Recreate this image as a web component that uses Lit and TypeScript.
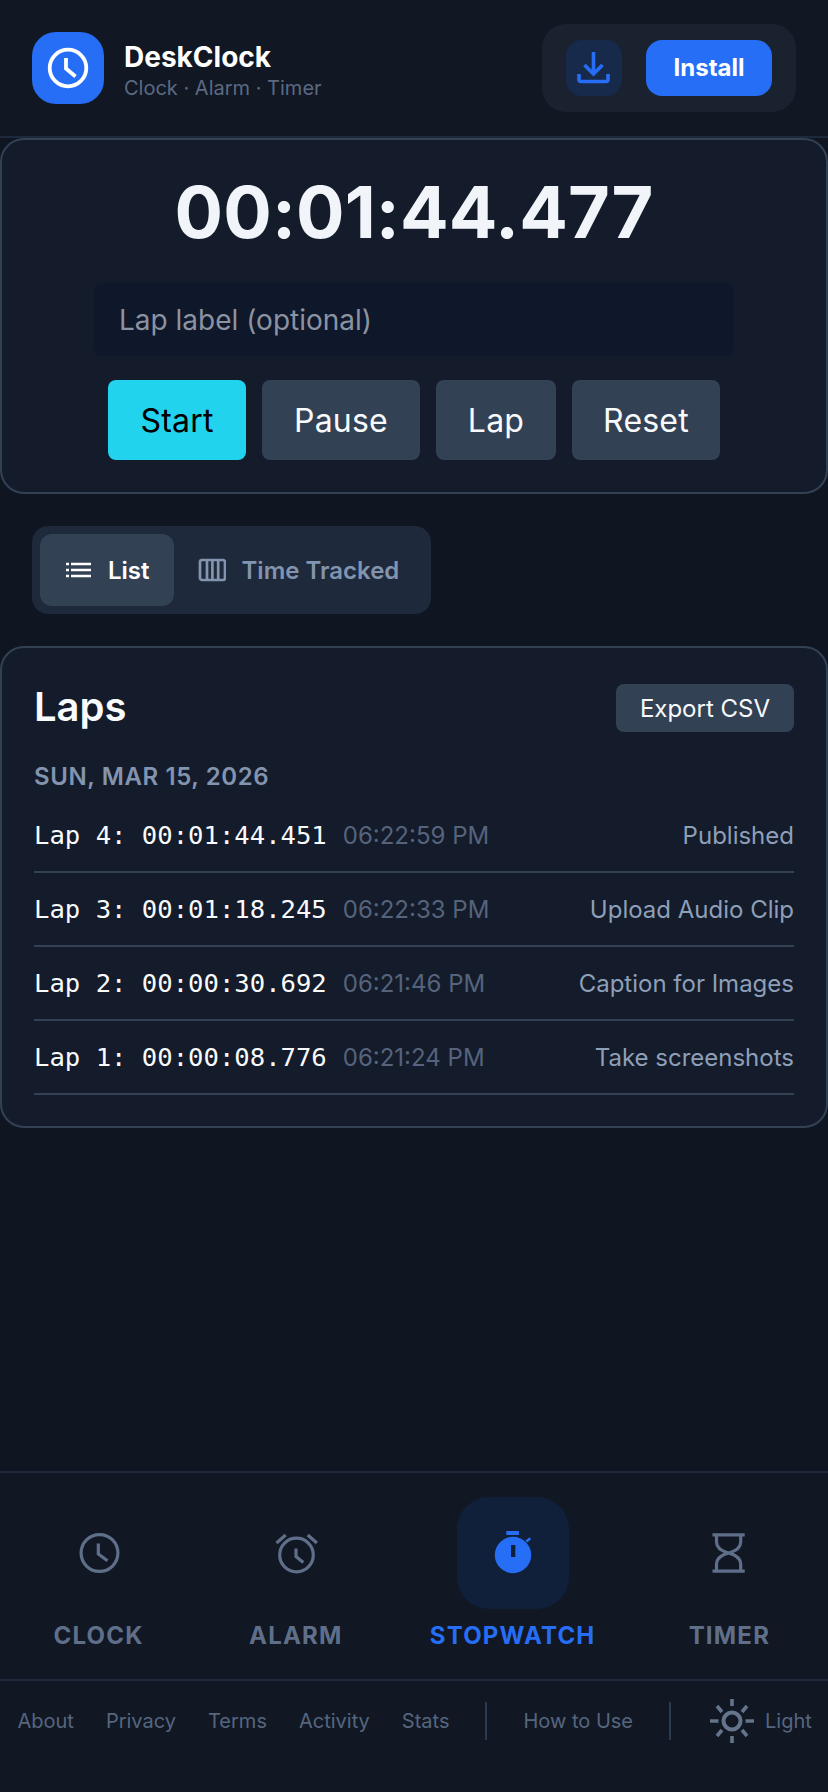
import { LitElement, html, css, svg } from 'lit'
import { customElement } from 'lit/decorators.js'

const laps = [
  { name: 'Lap 4: 00:01:44.451', time: '06:22:59 PM', label: 'Published' },
  { name: 'Lap 3: 00:01:18.245', time: '06:22:33 PM', label: 'Upload Audio Clip' },
  { name: 'Lap 2: 00:00:30.692', time: '06:21:46 PM', label: 'Caption for Images' },
  { name: 'Lap 1: 00:00:08.776', time: '06:21:24 PM', label: 'Take screenshots' },
]

const navIcons = {
  clock: svg`<circle cx="22.5" cy="22" r="18.4" /><path d="M21.3 12.5V23l9.2 6.7" />`,
  alarm: svg`<circle cx="22.5" cy="24" r="16.8" /><path d="M2.5 12l9.2-8M33.7 4l9.2 8M22 17.5v8l7.3 6" />`,
  stopwatch: svg`
    <g class="solid">
      <circle cx="22" cy="24" r="18.2" />
      <rect x="15.3" y="0" width="12.7" height="4" />
      <path d="M34.5 9.5l4-3.2 1.6 2-4 3.2z" />
    </g>
    <rect class="tick" x="20" y="14" width="4.3" height="12" />`,
  timer: svg`
    <path d="M5.5 3.8h32.2M5.5 40.2h32.2" />
    <path d="M9.5 5v6c0 6 5 9 12 11-7 2-12 5-12 11v6M33.7 5v6c0 6-5 9-12 11 7 2 12 5 12 11v6" />`,
}

const navItems = [
  { key: 'clock', label: 'CLOCK', wide: false, active: false },
  { key: 'alarm', label: 'ALARM', wide: false, active: false },
  { key: 'stopwatch', label: 'STOPWATCH', wide: true, active: true },
  { key: 'timer', label: 'TIMER', wide: false, active: false },
] as const

@customElement('app-root')
export class AppRoot extends LitElement {
  static styles = css`
    :host {
      display: block;
      font-family: Inter, 'Noto Sans', sans-serif;
      color: #f1f5f9;
    }

    * {
      box-sizing: border-box;
    }

    .page {
      height: 1792px;
      overflow: hidden;
      display: flex;
      flex-direction: column;
      background: #0f1621;
    }

    button {
      font: inherit;
      border: 0;
      cursor: pointer;
    }

    /* top bar */
    .top {
      height: 138px;
      display: flex;
      align-items: center;
      justify-content: space-between;
      padding: 0 32px;
      background: #111723;
      border-bottom: 2px solid #1e293b;
    }

    .brand {
      display: flex;
      align-items: center;
      gap: 20px;
    }

    .logo {
      width: 72px;
      height: 72px;
      border-radius: 24px;
      background: #266ef6;
      display: flex;
      align-items: center;
      justify-content: center;
    }

    .logo svg {
      fill: none;
      stroke: #fff;
      stroke-width: 3.8;
    }

    .brand-text {
      padding-top: 4px;
    }

    .title {
      font-size: 28px;
      line-height: 34px;
      font-weight: 700;
      color: #fff;
    }

    .sub {
      margin-top: 1px;
      font-size: 20px;
      line-height: 26px;
      color: #5b6a82;
    }

    .install-group {
      display: flex;
      align-items: center;
      gap: 24px;
      padding: 16px 24px;
      border-radius: 24px;
      background: #1a222f;
    }

    .dl {
      width: 56px;
      height: 56px;
      border-radius: 16px;
      background: #172a4b;
      display: flex;
      align-items: center;
      justify-content: center;
      padding: 0;
    }

    .dl svg {
      fill: none;
      stroke: #266ef6;
      stroke-width: 3.6;
    }

    .install {
      width: 126px;
      height: 56px;
      padding-bottom: 2px;
      border-radius: 16px;
      background: #266ef6;
      color: #fff;
      font-size: 24px;
      font-weight: 700;
    }

    /* cards */
    .card {
      background: #141b2a;
      border: 2px solid #334155;
      border-radius: 24px;
    }

    .watch {
      height: 356px;
      display: flex;
      flex-direction: column;
      align-items: center;
      padding-top: 28px;
    }

    .readout {
      font-size: 72px;
      line-height: 88px;
      font-weight: 700;
      letter-spacing: 0.1px;
      color: #f1f5f9;
    }

    .lap-input {
      width: 640px;
      height: 73px;
      margin-top: 27px;
      padding: 0 25px;
      border: 0;
      border-radius: 8px;
      background: #0f172a;
      color: #f1f5f9;
      font: inherit;
      font-size: 28px;
      outline: none;
    }

    .lap-input::placeholder {
      color: #8b93a1;
    }

    .controls {
      display: grid;
      grid-template-columns: 138px 158px 120px 148px;
      gap: 16px;
      margin-top: 24px;
    }

    .controls button {
      height: 80px;
      padding: 0;
      border-radius: 8px;
      background: #334155;
      color: #f8fafc;
      font-size: 32px;
      letter-spacing: 0.2px;
    }

    .controls .start {
      background: #22d3ee;
      color: #000;
    }

    /* list / time tracked switch */
    .switch-row {
      display: flex;
      padding: 32px;
    }

    .switch {
      display: flex;
      padding: 8px;
      border-radius: 16px;
      background: #1e293b;
    }

    .tab {
      height: 72px;
      display: flex;
      align-items: center;
      gap: 16px;
      padding: 0 24px;
      border-radius: 12px;
      background: none;
      color: #8294ae;
      font-size: 24px;
      font-weight: 600;
    }

    .tab.on {
      background: #334155;
      color: #fff;
    }

    .tab svg {
      fill: none;
      stroke: currentColor;
      stroke-width: 2.7;
    }

    /* laps */
    .laps {
      padding: 0 32px 31px;
    }

    .laps-head {
      display: flex;
      align-items: center;
      justify-content: space-between;
      padding-top: 36px;
    }

    .laps-head h2 {
      margin: 0;
      padding-bottom: 2px;
      font-size: 40px;
      line-height: 46px;
      font-weight: 600;
      color: #f8fafc;
    }

    .export {
      height: 48px;
      padding: 0 24px;
      border-radius: 8px;
      background: #334155;
      color: #f8fafc;
      font-size: 24px;
    }

    .date {
      margin-top: 30px;
      font-size: 24px;
      line-height: 30px;
      font-weight: 600;
      letter-spacing: 0.6px;
      color: #8294ae;
    }

    .rows {
      margin-top: 7px;
    }

    .row {
      height: 74px;
      display: flex;
      align-items: center;
      border-bottom: 2px solid #334155;
      font-size: 24px;
    }

    .row .name {
      font-family: 'DejaVu Sans Mono', 'Liberation Mono', monospace;
      font-size: 25.6px;
      color: #f8fafc;
      white-space: pre;
    }

    .row .time {
      margin-left: 16px;
      color: #55647c;
    }

    .row .label {
      margin-left: auto;
      color: #8e9fb8;
    }

    /* bottom nav */
    .nav {
      margin-top: auto;
      height: 208px;
      display: flex;
      justify-content: space-around;
      padding-top: 24px;
      background: #111723;
      border-top: 2px solid #1e293b;
    }

    .nav-item {
      width: 125px;
      display: flex;
      flex-direction: column;
      align-items: center;
      gap: 12px;
      color: #5f6f89;
    }

    .nav-item.wide {
      width: 164px;
    }

    .nav-item.active {
      color: #266ef6;
    }

    .nav-icon {
      width: 112px;
      height: 112px;
      flex: none;
      border-radius: 32px;
      display: flex;
      align-items: center;
      justify-content: center;
    }

    .active .nav-icon {
      background: #10203b;
    }

    .nav-icon svg {
      fill: none;
      stroke: currentColor;
      stroke-width: 3.2;
      overflow: visible;
    }

    .nav-icon .solid {
      fill: currentColor;
      stroke: none;
    }

    .nav-icon .tick {
      fill: #10203b;
      stroke: none;
    }

    .nav-label {
      font-size: 24px;
      line-height: 30px;
      font-weight: 700;
      letter-spacing: 1.2px;
      white-space: nowrap;
    }

    /* footer */
    .foot {
      height: 113px;
      display: flex;
      align-items: flex-start;
      padding: 18px 0 0 17.5px;
      background: #111723;
      border-top: 2px solid #1e293b;
      font-size: 20px;
      color: #56667f;
    }

    .foot-links {
      height: 44px;
      display: flex;
      align-items: center;
      gap: 32px;
    }

    .divider {
      width: 2px;
      height: 38px;
      margin: 3px 36px 0;
      background: #2c3a50;
    }

    .theme {
      height: 44px;
      display: flex;
      align-items: center;
      gap: 11px;
      margin-left: 3px;
    }

    .theme svg {
      fill: none;
      stroke: #64748b;
    }

    .theme .ring {
      stroke-width: 4;
    }

    .theme .rays {
      stroke-width: 3.6;
    }
  `

  renderLap(lap: { name: string; time: string; label: string }) {
    return html`
      <div class="row">
        <span class="name">${lap.name}</span>
        <span class="time">${lap.time}</span>
        <span class="label">${lap.label}</span>
      </div>
    `
  }

  render() {
    return html`
      <div class="page">
        <header class="top">
          <div class="brand">
            <div class="logo">
              <svg width="48" height="48" viewBox="0 0 48 48">
                <circle cx="24" cy="24" r="18.3" />
                <path d="M22 14v10.5l9.5 8" />
              </svg>
            </div>
            <div class="brand-text">
              <div class="title">DeskClock</div>
              <div class="sub">Clock · Alarm · Timer</div>
            </div>
          </div>
          <div class="install-group">
            <button class="dl" aria-label="Download">
              <svg width="36" height="36" viewBox="0 0 36 36">
                <path d="M17.5 2v21M8.5 15l9 9 9-9" />
                <path d="M3 24v5.5a2 2 0 0 0 2 2h25a2 2 0 0 0 2-2V24" />
              </svg>
            </button>
            <button class="install">Install</button>
          </div>
        </header>

        <section class="card watch">
          <div class="readout">00:01:44.477</div>
          <input class="lap-input" placeholder="Lap label (optional)" />
          <div class="controls">
            <button class="start">Start</button>
            <button>Pause</button>
            <button>Lap</button>
            <button>Reset</button>
          </div>
        </section>

        <div class="switch-row">
          <div class="switch">
            <button class="tab on">
              <svg width="28" height="28" viewBox="0 0 28 28">
                <path d="M7 8h20M7 14h20M7 20h20M2 8h3M2 14h3M2 20h3" />
              </svg>
              List
            </button>
            <button class="tab">
              <svg width="28" height="28" viewBox="0 0 28 28">
                <rect x="2" y="4" width="25" height="20" rx="2" />
                <path d="M9 4v20M14.4 4v20M20.2 4v20" />
              </svg>
              Time Tracked
            </button>
          </div>
        </div>

        <section class="card laps">
          <div class="laps-head">
            <h2>Laps</h2>
            <button class="export">Export CSV</button>
          </div>
          <div class="date">SUN, MAR 15, 2026</div>
          <div class="rows">${laps.map((lap) => this.renderLap(lap))}</div>
        </section>

        <nav class="nav">
          ${navItems.map(
            (item) => html`
              <div class="nav-item ${item.wide ? 'wide' : ''} ${item.active ? 'active' : ''}">
                <div class="nav-icon">
                  <svg width="44" height="44" viewBox="0 0 44 44">${navIcons[item.key]}</svg>
                </div>
                <span class="nav-label">${item.label}</span>
              </div>
            `,
          )}
        </nav>

        <footer class="foot">
          <div class="foot-links">
            <span>About</span>
            <span>Privacy</span>
            <span>Terms</span>
            <span>Activity</span>
            <span>Stats</span>
          </div>
          <div class="divider"></div>
          <div class="foot-links"><span>How to Use</span></div>
          <div class="divider"></div>
          <div class="theme">
            <svg width="44" height="44" viewBox="0 0 44 44">
              <circle class="ring" cx="22" cy="22" r="8.5" />
              <path class="rays" d="M22 0v7M22 37v7M0 22h8.5M35.5 22H44M7 7l5 6M37 7l-5 6M7 37l5-6M37 37l-5-6" />
            </svg>
            <span>Light</span>
          </div>
        </footer>
      </div>
    `
  }
}
